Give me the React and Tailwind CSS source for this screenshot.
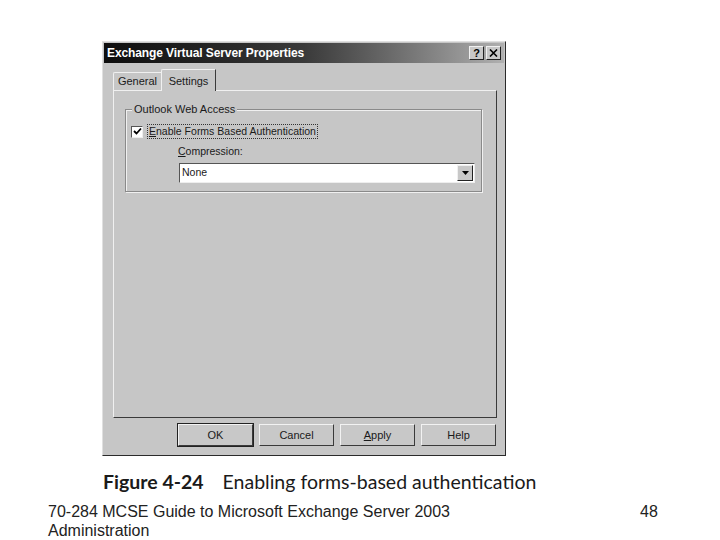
import React from "react";

const font = { fontFamily: '"Liberation Sans", Arial, sans-serif' };

function Btn({ children, bold }) {
  return (
    <div className={`w-[75px] h-[22px] flex items-center justify-center text-[11px] text-[#1a1a1a] bg-[#c8c8c8] border border-t-[#f2f2f2] border-l-[#f2f2f2] border-r-[#3a3a3a] border-b-[#3a3a3a] ${bold ? "outline outline-1 outline-[#222]" : ""}`}>
      {children}
    </div>
  );
}

export default function App() {
  return (
    <div className="w-[720px] h-[540px] bg-white relative overflow-hidden" style={font}>
      <div className="pt-[41px] pl-[102px]">
        {/* dialog */}
        <div className="w-[404px] h-[415px] bg-[#c6c6c6] border border-t-[#e0e0e0] border-l-[#e0e0e0] border-r-[#2a2a2a] border-b-[#2a2a2a] p-[1px] flex flex-col">
          <div className="h-[20px] bg-gradient-to-r from-[#0e0e0e] via-[#3a3a3a] to-[#b0b0b0] flex items-center justify-between pl-[3px] pr-[3px]">
            <span className="text-white font-bold text-[12px] tracking-[-0.1px]">Exchange Virtual Server Properties</span>
            <div className="flex gap-[2px]">
              <div className="w-[15px] h-[14px] bg-[#c8c8c8] border border-t-[#f0f0f0] border-l-[#f0f0f0] border-r-[#222] border-b-[#222] flex items-center justify-center text-[11px] font-bold leading-none text-black">?</div>
              <div className="w-[15px] h-[14px] bg-[#c8c8c8] border border-t-[#f0f0f0] border-l-[#f0f0f0] border-r-[#222] border-b-[#222] flex items-center justify-center">
                <svg width="9" height="8" viewBox="0 0 9 8"><path d="M1 0.5L8 7.5M8 0.5L1 7.5" stroke="#000" strokeWidth="1.6" /></svg>
              </div>
            </div>
          </div>
          {/* tabs */}
          <div className="pl-[9px] pt-[5px] flex items-end h-[27px]">
            <div className="h-[18px] w-[48px] border-t border-l border-[#f0f0f0] flex items-center justify-center text-[11px] text-[#1a1a1a] rounded-tl-[2px]">General</div>
            <div className="h-[22px] w-[55px] border-t border-l border-[#f0f0f0] border-r border-r-[#3a3a3a] flex items-start justify-center pt-[3px] text-[11px] text-[#1a1a1a] -mb-[1px] relative z-10 bg-[#c6c6c6] rounded-tl-[2px]">Settings</div>
          </div>
          <div className="ml-[9px] w-[384px] h-[328px] border border-t-[#f0f0f0] border-l-[#f0f0f0] border-r-[#3a3a3a] border-b-[#3a3a3a] pt-[18px] pl-[11px]">
            {/* group box */}
            <div className="relative w-[357px] h-[83px] border border-[#8a8a8a] shadow-[inset_1px_1px_0_#f0f0f0,1px_1px_0_#f0f0f0]">
              <span className="absolute -top-[8px] left-[6px] bg-[#c6c6c6] px-[2px] text-[11px] leading-[14px] text-[#1a1a1a]">Outlook Web Access</span>
              <div className="flex items-center pt-[14px] pl-[5px] gap-[4px]">
                <div className="w-[12px] h-[12px] bg-white border border-t-[#555] border-l-[#555] border-r-[#eee] border-b-[#eee] flex items-center justify-center">
                  <svg width="9" height="9" viewBox="0 0 9 9"><path d="M1 4L3.5 6.5L8 1.5" stroke="#000" strokeWidth="1.8" fill="none" /></svg>
                </div>
                <span className="text-[10.5px] leading-[13px] text-[#1a1a1a] border border-dotted border-[#333] px-[1px]"><u>E</u>nable Forms Based Authentication</span>
              </div>
              <div className="pl-[52px] pt-[6px] text-[10.5px] leading-[13px] text-[#1a1a1a]"><u>C</u>ompression:</div>
              <div className="ml-[53px] mt-[5px] w-[296px] h-[20px] bg-white border border-t-[#555] border-l-[#555] border-r-[#eee] border-b-[#eee] flex items-center justify-between pl-[2px] pr-[1px]">
                <span className="text-[10.5px] text-[#1a1a1a]">None</span>
                <div className="w-[16px] h-[16px] bg-[#c8c8c8] border border-t-[#f0f0f0] border-l-[#f0f0f0] border-r-[#222] border-b-[#222] flex items-center justify-center">
                  <svg width="7" height="4" viewBox="0 0 7 4"><path d="M0 0H7L3.5 4Z" fill="#000" /></svg>
                </div>
              </div>
            </div>
          </div>
          <div className="flex justify-end gap-[6px] pr-[8px] pt-[6px]">
            <Btn bold>OK</Btn>
            <Btn>Cancel</Btn>
            <Btn><u>A</u>pply</Btn>
            <Btn>Help</Btn>
          </div>
        </div>
      </div>
      <div className="absolute left-[103px] top-[467px] text-[19.5px] text-[#1a1a1a] whitespace-nowrap" style={{ fontFamily: 'Lato, "Open Sans", sans-serif' }}>
        <span className="font-bold">Figure 4-24</span>
        <span className="ml-[19px]">Enabling forms-based authentication</span>
      </div>
      <div className="absolute left-[48px] top-[502px] text-[16px] leading-[19px] text-[#222]" style={font}>
        70-284 MCSE Guide to Microsoft Exchange Server 2003<br />Administration
      </div>
      <div className="absolute left-[640px] top-[502px] text-[16px] leading-[19px] text-[#222]" style={font}>48</div>
    </div>
  );
}
